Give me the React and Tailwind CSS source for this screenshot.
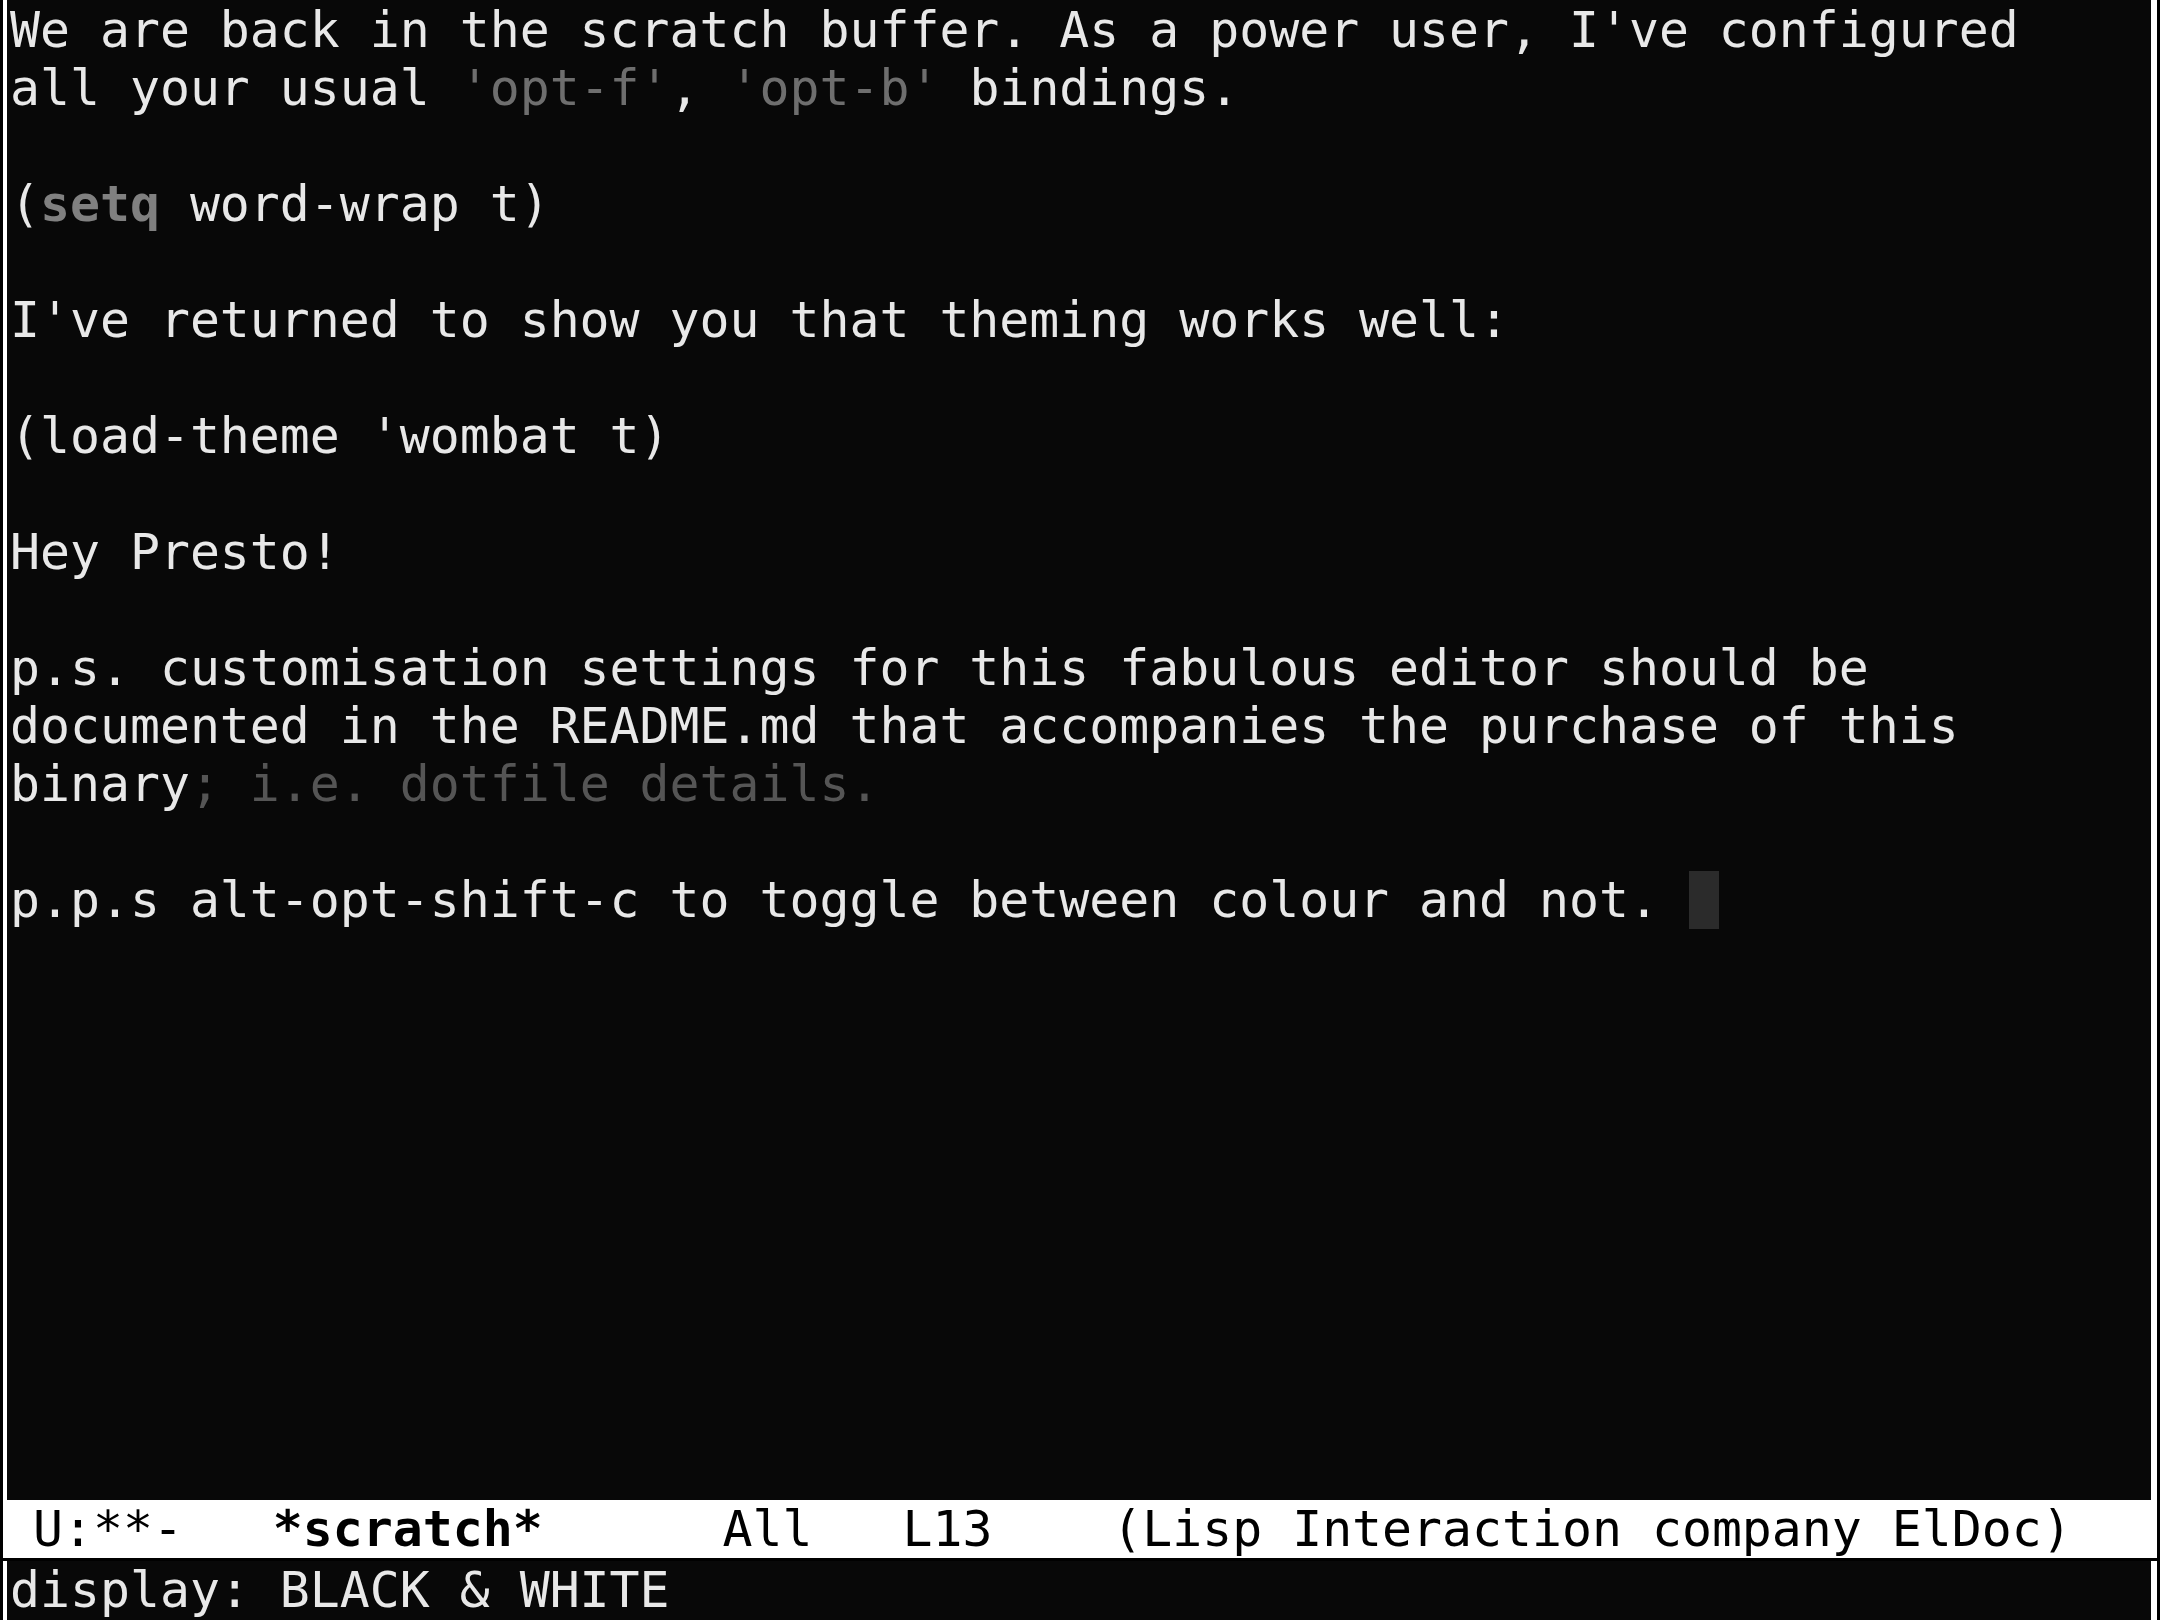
const dim = "text-[#6e6e6e]";

function Line({ children }) {
  return <div className="h-[58px] whitespace-pre">{children}</div>;
}

function Bars({ children, className = "" }) {
  return (
    <div className={"flex " + className}>
      <div className="w-[3px] shrink-0 bg-black" />
      <div className="w-[4px] shrink-0 bg-white" />
      <div className="flex-1 min-w-0 bg-[#080808] overflow-hidden">{children}</div>
      <div className="w-[6px] shrink-0 bg-white" />
      <div className="w-[3px] shrink-0 bg-black" />
    </div>
  );
}

export default function App() {
  return (
    <div
      className="w-[2160px] h-[1620px] bg-black overflow-hidden text-[49.8px] leading-[58px] text-[#e8e8e8]"
      style={{ fontFamily: '"DejaVu Sans Mono", monospace' }}
    >
      <Bars className="h-[1500px]">
        <div className="pl-[3px] pt-[1px]">
          <Line>We are back in the scratch buffer. As a power user, I've configured</Line>
          <Line>
            all your usual <span className={dim}>'opt-f'</span>, <span className={dim}>'opt-b'</span> bindings.
          </Line>
          <Line />
          <Line>
            (<span className="font-bold text-[#808080]">setq</span> word-wrap t)
          </Line>
          <Line />
          <Line>I've returned to show you that theming works well:</Line>
          <Line />
          <Line>(load-theme 'wombat t)</Line>
          <Line />
          <Line>Hey Presto!</Line>
          <Line />
          <Line>p.s. customisation settings for this fabulous editor should be</Line>
          <Line>documented in the README.md that accompanies the purchase of this</Line>
          <Line>
            binary<span className="text-[#555555]">; i.e. dotfile details.</span>
          </Line>
          <Line />
          <Line>
            p.p.s alt-opt-shift-c to toggle between colour and not.{" "}
            <span className="inline-block w-[30px] h-[58px] align-top bg-[#2b2b2b]" />
          </Line>
        </div>
      </Bars>

      <div className="ml-[3px] w-[2154px] h-[58px] bg-white text-black whitespace-pre">
        {" U:**-   "}
        <span className="font-bold">*scratch*</span>
        {"      All   L13    (Lisp Interaction company ElDoc)"}
      </div>

      <div className="h-[3px]" />

      <Bars className="h-[59px]">
        <div className="pl-[3px] whitespace-pre">display: BLACK &amp; WHITE</div>
      </Bars>
    </div>
  );
}
